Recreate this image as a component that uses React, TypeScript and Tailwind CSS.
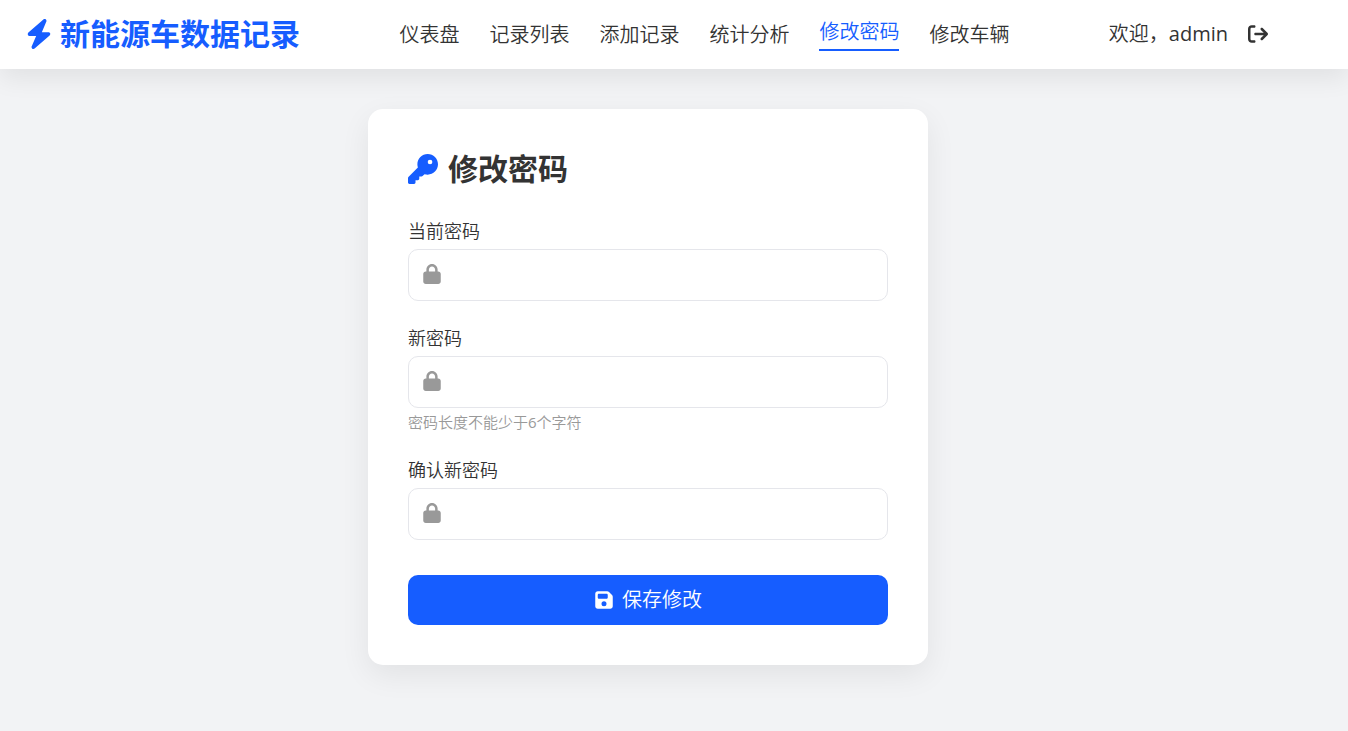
import { useState } from 'react';
import { FaArrowRightFromBracket, FaBolt, FaFloppyDisk, FaKey, FaLock } from 'react-icons/fa6';

const navItems = [
  { label: '仪表盘', href: '#dashboard' },
  { label: '记录列表', href: '#records' },
  { label: '添加记录', href: '#add' },
  { label: '统计分析', href: '#stats' },
  { label: '修改密码', href: '#password' },
  { label: '修改车辆', href: '#vehicle' },
];

function Header({ active }: { active: string }) {
  return (
    <header className="bg-white pr-[52px] shadow-[0_10px_25px_rgba(0,0,0,0.07)]">
      <div className="max-w-[1248px] h-[69px] pb-0.5 mx-auto flex items-center justify-between whitespace-nowrap">
        <a href="#home" className="flex items-center gap-[6px] text-3xl font-bold text-[#165dff]">
          <FaBolt />
          新能源车数据记录
        </a>
        <nav className="pt-0.5 flex items-center gap-[30px] text-xl leading-[26px]">
          {navItems.map(item => (
            <a
              key={item.href}
              href={item.href}
              className={item.label === active ? 'text-[#165dff] border-b-2 border-[#165dff] pb-1' : 'hover:text-[#165dff]'}
            >
              {item.label}
            </a>
          ))}
        </nav>
        <div className="flex items-center gap-5 text-xl">
          <span>欢迎，<span className="font-normal">admin</span></span>
          <button type="button" aria-label="退出登录" className="pr-1 hover:text-[#165dff]">
            <FaArrowRightFromBracket />
          </button>
        </div>
      </div>
    </header>
  );
}

function PasswordField({ id, label, hint, value, onChange }: {
  id: string,
  label: string,
  hint?: React.ReactNode,
  value: string,
  onChange: (e: React.ChangeEvent<HTMLInputElement>) => void
}) {
  return (
    <div>
      <label htmlFor={id} className="block mb-[6px] text-lg leading-6">{label}</label>
      <div className="relative">
        <FaLock className="absolute left-[14px] top-[15px] text-xl text-[#999]" />
        <input
          id={id}
          name={id}
          type="password"
          value={value}
          onChange={onChange}
          className="block w-full h-[52px] pl-12 pr-4 text-xl bg-white border border-[#e5e6eb] rounded-[10px] outline-none focus:border-[#165dff]"
          required
        />
      </div>
      {hint && <p className="mt-1 text-[15px] leading-[21px] text-[#999]">{hint}</p>}
    </div>
  );
}

export default function App() {
  const [form, setForm] = useState({ current: '', next: '', confirm: '' });

  const handleChange = (e: React.ChangeEvent<HTMLInputElement>) => {
    const { name, value } = e.target;
    setForm(f => ({ ...f, [name]: value }));
  };

  return (
    <div className="min-h-screen bg-[#f2f3f5] text-[#333] font-['Open_Sans','Noto_Sans_CJK_SC',sans-serif] font-[350]" lang="zh-CN">
      <Header active="修改密码" />
      <main className="py-10 pr-[52px]">
        <form
          className="max-w-[560px] mx-auto p-10 bg-white rounded-[15px] shadow-[0_10px_30px_rgba(0,0,0,0.07)]"
          onSubmit={e => e.preventDefault()}
        >
          <h2 className="mb-[30px] flex items-center gap-[10px] text-3xl leading-10 font-bold">
            <FaKey className="text-[#165dff]" />
            修改密码
          </h2>
          <div className="flex flex-col gap-[25px]">
            <PasswordField id="current" label="当前密码" value={form.current} onChange={handleChange} />
            <PasswordField
              id="next"
              label="新密码"
              hint={<>密码长度不能少于<span className="font-normal">6</span>个字符</>}
              value={form.next}
              onChange={handleChange}
            />
            <PasswordField id="confirm" label="确认新密码" value={form.confirm} onChange={handleChange} />
          </div>
          <button
            type="submit"
            className="w-full h-[50px] mt-[35px] flex items-center justify-center gap-2 rounded-[10px] bg-[#165dff] text-xl text-white hover:bg-[#0e4fe0]"
          >
            <FaFloppyDisk />
            保存修改
          </button>
        </form>
      </main>
    </div>
  );
}
